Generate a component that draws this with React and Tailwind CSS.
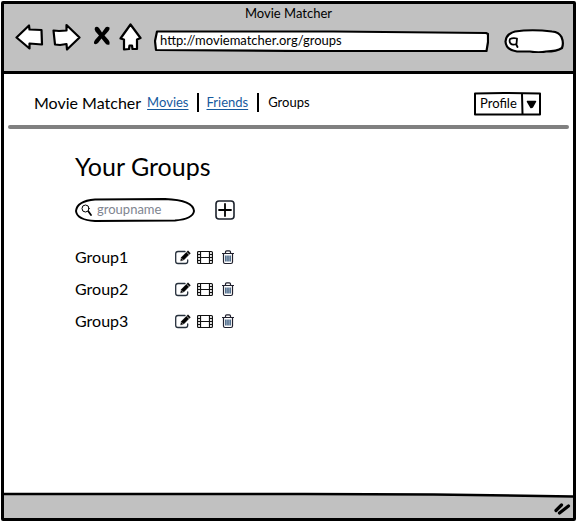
import React from "react";

const ink = { stroke: "#000", strokeLinecap: "round", strokeLinejoin: "round" };

function BackIcon() {
  return (
    <svg viewBox="0 0 29 28" className="h-7 w-[29px]" fill="#fff" strokeWidth="2.2" {...ink}>
      <path d="M1.5 14.5 14 2.5 14.5 6.5 26.5 7 27 21.5 14.5 20.5 14.5 25.5Z" />
    </svg>
  );
}

function ForwardIcon() {
  return (
    <svg viewBox="0 0 29 28" className="h-7 w-[29px]" fill="#fff" strokeWidth="2.2" {...ink}>
      <path d="M1.5 7.5 7 8 14.5 7.5 14.5 2 27.5 14.5 15 26.5 14.5 21 8 22 3 21.5Z" />
    </svg>
  );
}

function StopIcon() {
  return (
    <svg viewBox="0 0 18 20" className="h-5 w-[18px]" fill="#000">
      <path d="M2 1.5Q4 0 6 2L9 6.5 12.5 1.5Q14 0 16.5 1.5 17 3 15.5 5L11.5 9.5 15.500 14Q17.5 16.5 16.5 18.500 14 19.5 12.5 17.5L8.5 12.5 5 17Q3 19 1 17.5 0.5 16 2 14L6 9.5 2.5 5.5Q1 3 2 1.5Z" />
    </svg>
  );
}

function HomeIcon() {
  return (
    <svg viewBox="0 0 23 28" className="h-7 w-[23px]" fill="#fff" strokeWidth="2.2" {...ink}>
      <path d="M11.5 1.5 21.5 15 18 16.5 18 26 13.5 26 13 22.5 10.5 22.5 10 26 5 26.5 5 16.5 1.5 15.5Z" />
    </svg>
  );
}

function EditIcon() {
  return (
    <svg viewBox="0 0 16 16" className="h-4 w-4" fill="none" {...ink}>
      <path d="M10 2.5H3Q0.7 2.5 0.7 4.7V12.3Q0.7 14.5 3 14.5H10.5Q12.7 14.5 12.7 12.3V11" stroke="#26303c" strokeWidth="1.3" />
      <path d="M5.8 11.5 6.5 8.3 13 1.8 15.3 4.2 8.9 10.7Z" fill="#000" strokeWidth="0.6" />
      <path d="M7 9.8 7.6 10.4M11.8 3.4 13.8 5.3" stroke="#fff" strokeWidth="0.7" />
    </svg>
  );
}

function FilmIcon() {
  return (
    <svg viewBox="0 0 16 16" className="h-4 w-4" fill="none" stroke="#111" strokeWidth="1.2">
      <rect x="0.6" y="2.5" width="14.8" height="12" rx="1" />
      <path d="M3.5 2V14.5M12.5 2V14.5M3.5 8.5H12.5" />
      <path d="M1 5.5H4M1 8.5H4M1 11.5H4M12 5.5H15M12 8.5H15M12 11.5H15" />
    </svg>
  );
}

function TrashIcon() {
  return (
    <svg viewBox="0 0 14 16" className="h-4 w-3.5" fill="none" stroke="#20202e" strokeWidth="1.2" strokeLinejoin="round">
      <path d="M1 4.5H13M4.5 4.5V3Q4.5 1.8 5.7 1.8H8.3Q9.5 1.8 9.5 3V4.5M2.5 4.5V13Q2.500 14.5 4 14.5H10Q11.5 14.5 11.5 13V4.500" />
      <path d="M4.9 6.5V12.5M7 6.5V12.5M9.1 6.5V12.5" stroke="#0c3560" />
    </svg>
  );
}

function Toolbar() {
  const tool = "flex shrink-0 items-center justify-center";
  return (
    <header className="border-b-[3px] border-black bg-[#c1c1c1] pb-[11px]">
      <p className="text-center text-[13px] leading-[18px]">Movie Matcher</p>
      <div className="flex h-[38px] items-center pr-[9px] pl-[11px]">
        <div className="flex items-center pb-2">
          <button aria-label="Back" className={tool}><BackIcon /></button>
          <button aria-label="Forward" className={tool + " ml-2"}><ForwardIcon /></button>
          <button aria-label="Stop" className={tool + " ml-3 pb-0.5"}><StopIcon /></button>
          <button aria-label="Home" className={tool + " ml-2"}><HomeIcon /></button>
        </div>
        <div className="relative ml-3 h-[22px] min-w-0 flex-1">
          <svg viewBox="0 0 336 22" preserveAspectRatio="none" className="absolute inset-0 h-full w-full" fill="#fff" strokeWidth="2.2" {...ink}>
            <path d="M3 1.5 180 1.5 333 3 335 4 335 12 333.5 21 150 21 2 20 1 11Z" />
          </svg>
          <input aria-label="Address" defaultValue="http://moviematcher.org/groups" className="relative block h-full w-full bg-transparent px-1.5 pb-0.5 text-[13px] outline-none" />
        </div>
        <div className="relative ml-[15px] h-6 w-[60px] shrink-0">
          <svg viewBox="0 0 60 24" className="absolute inset-0 h-full w-full" fill="#fff" strokeWidth="2.2" {...ink}>
            <path d="M11 2.5Q28 0 48 2.5 55 3 57.5 8 60 14 58 19 53 22.5 42 22.5 35 24 26 22.5L13 22.5Q2 21 1.5 12.5 2 5 11 2.5Z" />
            <path d="M6 10Q9 8.5 13 9.5L12.5 15Q8.5 16.5 6.5 14.5 5 12.5 6 10ZM12 15 13.5 18" fill="none" strokeWidth="1.8" />
          </svg>
          <input aria-label="Web search" className="relative block h-full w-full bg-transparent pr-2 pl-5 text-[13px] outline-none" />
        </div>
      </div>
    </header>
  );
}

function SiteNav() {
  return (
    <nav className="flex h-[51px] items-center pt-1.5 pr-8 pl-[30px] text-[13px]">
      <span className="text-base">Movie Matcher</span>
      <a href="#movies" className="ml-1.5 text-[#165a9e] underline underline-offset-2">Movies</a>
      <span className="mx-2 h-[19px] w-0.5 bg-black" />
      <a href="#friends" className="text-[#165a9e] underline underline-offset-2">Friends</a>
      <span className="mx-[9px] h-[19px] w-0.5 bg-black" />
      <span>Groups</span>
      <div className="relative mt-0.5 ml-auto h-6 w-[67px]">
        <select aria-label="Profile" className="block h-full w-full appearance-none bg-white pl-1.5 text-[13px] outline-none">
          <option>Profile</option>
        </select>
        <svg viewBox="0 0 67 24" className="pointer-events-none absolute inset-0 h-full w-full" fill="none" strokeWidth="2" {...ink}>
          <path d="M1 1.5 30 1 66 1.5 66 22.5 30 22.5 1 22.5ZM48 2 48.5 22" />
          <path d="M53.500 9.5 61.5 9.500 58.5 15 57 15.500Z" fill="#000" strokeWidth="1.5" />
        </svg>
      </div>
    </nav>
  );
}

function GroupRow({ name }) {
  return (
    <li className="flex h-8 items-center">
      <span className="w-[100px] text-base">{name}</span>
      <button aria-label={"Edit " + name}><EditIcon /></button>
      <button aria-label={"Movies of " + name} className="ml-1.5"><FilmIcon /></button>
      <button aria-label={"Delete " + name} className="ml-2"><TrashIcon /></button>
    </li>
  );
}

export default function App() {
  return (
    <div className="flex min-h-screen bg-white p-px font-['Lato',sans-serif] text-black">
      <div className="flex min-w-0 flex-1 flex-col rounded-xs border-[3px] border-black">
        <Toolbar />
        <SiteNav />
        <hr className="mx-1 h-1 rounded-full border-0 bg-[#808080]" />
        <main className="flex-1 px-[71px] pt-[21px]">
          <h1 className="text-[25px] leading-8">Your Groups</h1>
          <div className="mt-4 flex items-center">
            <div className="relative h-6 w-[120px]">
              <svg viewBox="0 0 120 24" className="absolute inset-0 h-full w-full" fill="#fff" strokeWidth="2" {...ink}>
                <path d="M20 1.5 90 1Q118 2 119 13 118 21 100 22.5L20 23Q2 22 1 13 2 3 20 1.5Z" />
                <circle cx="10.5" cy="10.5" r="3.5" fill="none" strokeWidth="1" />
                <path d="M13.5 13.5 16 17" strokeWidth="1.8" />
              </svg>
              <input aria-label="Group name" placeholder="groupname" className="relative block h-full w-full bg-transparent pr-3 pb-0.5 pl-[22px] text-[13px] outline-none placeholder:text-[#808590]" />
            </div>
            <button aria-label="Add group" className="ml-5">
              <svg viewBox="0 0 20 20" className="h-5 w-5" fill="none" {...ink}>
                <rect x="1" y="1" width="18" height="18" rx="3" stroke="#1c222c" strokeWidth="1.6" />
                <path d="M10 4V16M4 10H16" strokeWidth="1.8" />
              </svg>
            </button>
          </div>
          <ul className="mt-[19px]">
            <GroupRow name="Group1" />
            <GroupRow name="Group2" />
            <GroupRow name="Group3" />
          </ul>
        </main>
        <footer className="relative flex h-[26px] items-center justify-end pt-1.5">
          <svg viewBox="0 0 569 26" preserveAspectRatio="none" className="absolute inset-0 h-full w-full">
            <path d="M0 2H300L430 2.5 569 4.5V26H0Z" fill="#c1c1c1" />
            <path d="M0 2H300L430 2.5 569 4.5" fill="none" stroke="#000" strokeWidth="2.5" />
          </svg>
          <svg viewBox="0 0 18 16" className="relative mr-0.5 h-4 w-[18px]" fill="none" strokeWidth="3.2" {...ink}>
            <path d="M3 10.5 8.500 5M6.5 13 15.5 6" />
          </svg>
        </footer>
      </div>
    </div>
  );
}
